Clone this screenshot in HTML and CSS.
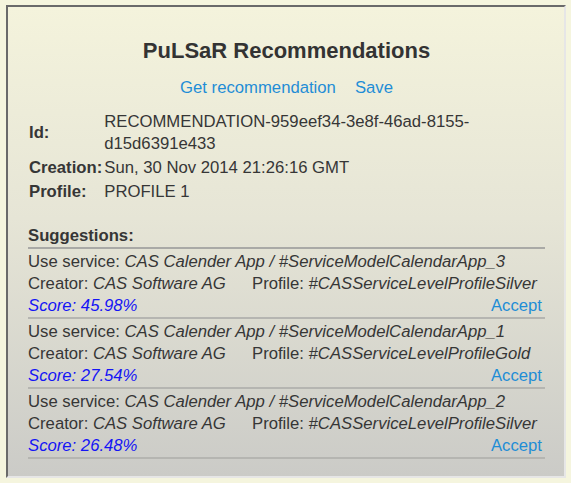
FILE: index.html
```html
<!DOCTYPE html>
<html>
<head>
<meta charset="utf-8">
<link rel="stylesheet" href="styles.css">
</head>
<body>
<div class="panel">
  <h1 class="title">PuLSaR Recommendations</h1>
  <div class="actions">
    <a class="link">Get recommendation</a>
    <a class="link">Save</a>
  </div>
  <table class="info">
    <tr><th>Id:</th><td>RECOMMENDATION-959eef34-3e8f-46ad-8155-d15d6391e433</td></tr>
    <tr><th>Creation:</th><td>Sun, 30 Nov 2014 21:26:16 GMT</td></tr>
    <tr><th>Profile:</th><td>PROFILE 1</td></tr>
  </table>
  <div class="sugg-head">Suggestions:</div>
  <div class="sugg">
    <div class="line">Use service: <i>CAS Calender App / #ServiceModelCalendarApp_3</i></div>
    <div class="line"><span class="creator">Creator: <i>CAS Software AG</i></span>Profile: <i>#CASServiceLevelProfileSilver</i></div>
    <div class="line score-row"><i class="score">Score: 45.98%</i><a class="link">Accept</a></div>
  </div>
  <div class="sugg">
    <div class="line">Use service: <i>CAS Calender App / #ServiceModelCalendarApp_1</i></div>
    <div class="line"><span class="creator">Creator: <i>CAS Software AG</i></span>Profile: <i>#CASServiceLevelProfileGold</i></div>
    <div class="line score-row"><i class="score">Score: 27.54%</i><a class="link">Accept</a></div>
  </div>
  <div class="sugg">
    <div class="line">Use service: <i>CAS Calender App / #ServiceModelCalendarApp_2</i></div>
    <div class="line"><span class="creator">Creator: <i>CAS Software AG</i></span>Profile: <i>#CASServiceLevelProfileSilver</i></div>
    <div class="line score-row"><i class="score">Score: 26.48%</i><a class="link">Accept</a></div>
  </div>
</div>
</body>
</html>
```
FILE: styles.css
```css
html, body {
  margin: 0;
  padding: 0;
  background: #f5f5de;
}
body {
  font-family: "Liberation Sans", Arial, sans-serif;
  font-size: 16.7px;
  color: #363636;
}
.panel {
  box-sizing: border-box;
  width: 560px;
  height: 473px;
  margin: 5px 0 0 6px;
  padding: 32px 19px 0 20px;
  border-style: solid;
  border-width: 2px;
  border-color: #6a6a6a #e6e6e6 #e6e6e6 #6a6a6a;
  background: linear-gradient(to bottom, #f4f3dc 0%, #e6e5d6 45%, #cbcbc7 100%);
}
.title {
  margin: 0;
  font-size: 22px;
  line-height: 24px;
  font-weight: bold;
  text-align: center;
  color: #333;
}
.actions {
  margin-top: 15px;
  display: flex;
  justify-content: center;
  gap: 19px;
  line-height: 20px;
}
.link {
  color: #1f8dd6;
  text-decoration: none;
}
.info {
  margin-top: 12px;
  width: 100%;
  border-collapse: collapse;
}
.info th {
  text-align: left;
  font-weight: bold;
  white-space: nowrap;
  padding: 1px 2px 1px 1px;
  width: 1%;
  line-height: 22px;
  vertical-align: middle;
}
.info td {
  padding: 1px 0;
  line-height: 22px;
}
.sugg-head {
  margin-top: 21px;
  font-weight: bold;
  line-height: 22px;
  border-bottom: 2px solid #a9a9a6;
}
.sugg {
  padding-top: 2px;
  border-bottom: 2px solid #b5b5b1;
}
.line {
  line-height: 22px;
  white-space: nowrap;
}
.creator {
  display: inline-block;
  width: 224px;
}
.score-row {
  display: flex;
  justify-content: space-between;
  padding-right: 3px;
}
.score {
  color: #1515f5;
}
```
